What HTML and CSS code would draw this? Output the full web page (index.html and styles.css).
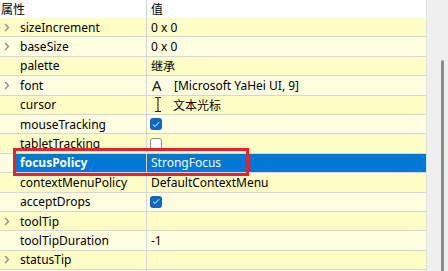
FILE: index.html
```html
<!DOCTYPE html>
<html>
<head>
<meta charset="utf-8">
<link rel="stylesheet" href="styles.css">
</head>
<body>
<div class="view">
  <div class="table">
    <div class="row header">
      <div class="cell name"><span class="htext">属性</span></div>
      <div class="cell value"><span class="htext">值</span></div>
    </div>
    <div class="row dark">
      <div class="cell name"><span class="branch"><svg width="6" height="9" viewBox="0 0 6 9"><path d="M1 1 L4.5 4.5 L1 8" fill="none" stroke="#8a8a8a" stroke-width="1.3"/></svg></span>sizeIncrement</div>
      <div class="cell value">0 x 0</div>
    </div>
    <div class="row light">
      <div class="cell name"><span class="branch"><svg width="6" height="9" viewBox="0 0 6 9"><path d="M1 1 L4.5 4.5 L1 8" fill="none" stroke="#8a8a8a" stroke-width="1.3"/></svg></span>baseSize</div>
      <div class="cell value">0 x 0</div>
    </div>
    <div class="row dark">
      <div class="cell name"><span class="branch"></span>palette</div>
      <div class="cell value">继承</div>
    </div>
    <div class="row light">
      <div class="cell name"><span class="branch"><svg width="6" height="9" viewBox="0 0 6 9"><path d="M1 1 L4.5 4.5 L1 8" fill="none" stroke="#8a8a8a" stroke-width="1.3"/></svg></span>font</div>
      <div class="cell value"><span class="icon font-a">A</span>[Microsoft YaHei UI, 9]</div>
    </div>
    <div class="row dark">
      <div class="cell name"><span class="branch"></span>cursor</div>
      <div class="cell value"><span class="icon"><svg width="10" height="17" viewBox="0 0 10 17"><path d="M2 1.5 H4 Q5 1.5 5 3 V14 Q5 15.5 4 15.5 H2 M8 1.5 H6 Q5 1.5 5 3 M5 14 Q5 15.5 6 15.5 H8" fill="none" stroke="#222" stroke-width="1.1"/></svg></span>文本光标</div>
    </div>
    <div class="row light">
      <div class="cell name"><span class="branch"></span>mouseTracking</div>
      <div class="cell value"><span class="check on"><svg width="8" height="7" viewBox="0 0 8 7"><path d="M1 3.6 L3 5.5 L7 1.3" fill="none" stroke="#fff" stroke-width="1"/></svg></span></div>
    </div>
    <div class="row dark">
      <div class="cell name"><span class="branch"></span>tabletTracking</div>
      <div class="cell value"><span class="check off"></span></div>
    </div>
    <div class="row selected">
      <div class="cell name"><span class="branch"></span><b>focusPolicy</b></div>
      <div class="cell value">StrongFocus</div>
    </div>
    <div class="row dark">
      <div class="cell name"><span class="branch"></span>contextMenuPolicy</div>
      <div class="cell value">DefaultContextMenu</div>
    </div>
    <div class="row light">
      <div class="cell name"><span class="branch"></span>acceptDrops</div>
      <div class="cell value"><span class="check on"><svg width="8" height="7" viewBox="0 0 8 7"><path d="M1 3.6 L3 5.5 L7 1.3" fill="none" stroke="#fff" stroke-width="1"/></svg></span></div>
    </div>
    <div class="row dark">
      <div class="cell name"><span class="branch"><svg width="6" height="9" viewBox="0 0 6 9"><path d="M1 1 L4.5 4.5 L1 8" fill="none" stroke="#8a8a8a" stroke-width="1.3"/></svg></span>toolTip</div>
      <div class="cell value"></div>
    </div>
    <div class="row light">
      <div class="cell name"><span class="branch"></span>toolTipDuration</div>
      <div class="cell value">-1</div>
    </div>
    <div class="row dark">
      <div class="cell name"><span class="branch"><svg width="6" height="9" viewBox="0 0 6 9"><path d="M1 1 L4.5 4.5 L1 8" fill="none" stroke="#8a8a8a" stroke-width="1.3"/></svg></span>statusTip</div>
      <div class="cell value"></div>
    </div>
    <div class="row light">
      <div class="cell name"><span class="branch"></span></div>
      <div class="cell value"></div>
    </div>
  </div>
  <div class="scrollbar"><div class="thumb"></div></div>
  <div class="focus-frame"></div>
</div>
</body>
</html>
```
FILE: styles.css
```css
html, body {
  margin: 0;
  padding: 0;
  background: #ffffff;
}
body {
  font-family: "Noto Sans", "Noto Sans CJK SC", sans-serif;
  font-size: 12px;
  color: #000;
}
.view {
  position: relative;
  display: flex;
  width: 448px;
  height: 271px;
  overflow: hidden;
}
.table {
  width: 426px;
  display: flex;
  flex-direction: column;
  flex: none;
}
.row {
  display: grid;
  grid-template-columns: 147px 1fr;
  height: 19.4px;
  flex: none;
  box-sizing: border-box;
  border-bottom: 1px solid #d6d6d6;
}
.row.header {
  height: 18px;
  border-bottom: none;
  background: #ffffff;
}
.row.dark { background: #fffdc6; }
.row.light { background: #fffee0; }
.cell {
  display: flex;
  align-items: center;
  white-space: nowrap;
  overflow: hidden;
}
.cell.name {
  border-right: 1px solid #d6d6d6;
}
.cell.value {
  padding-left: 4px;
}
.htext {
  padding-left: 1px;
}
.header .cell.value { padding-left: 3px; }
.branch {
  width: 20px;
  flex: none;
  display: flex;
  align-items: center;
  padding-left: 4px;
  box-sizing: border-box;
}
.row.selected {
  background: linear-gradient(to right, #fffee0 16px, #0078d7 16px);
  color: #ffffff;
}
.row.selected b { font-weight: 700; }
.icon {
  width: 22px;
  flex: none;
  display: flex;
  align-items: center;
}
.icon svg { margin-left: 2px; }
.font-a {
  font-size: 15px;
  line-height: 1;
  padding-left: 1px;
  color: #222;
}
.check {
  width: 12px;
  height: 12px;
  box-sizing: border-box;
  border-radius: 3px;
  display: flex;
  align-items: center;
  justify-content: center;
  margin-left: -1px;
}
.check.on { background: #0a67c3; }
.check.off {
  background: #ffffff;
  border: 1px solid #8a8a8a;
}
.scrollbar {
  flex: 1;
  background: #efefef;
  border-left: 1px solid #e2e2e2;
  position: relative;
}
.thumb {
  position: absolute;
  left: 14px;
  top: 60px;
  bottom: -4px;
  width: 3px;
  border-radius: 2px;
  background: #8c8c8c;
}
.focus-frame {
  position: absolute;
  left: 13px;
  top: 148px;
  width: 236px;
  height: 28px;
  box-sizing: border-box;
  border: 3px solid #e6222a;
}
```
